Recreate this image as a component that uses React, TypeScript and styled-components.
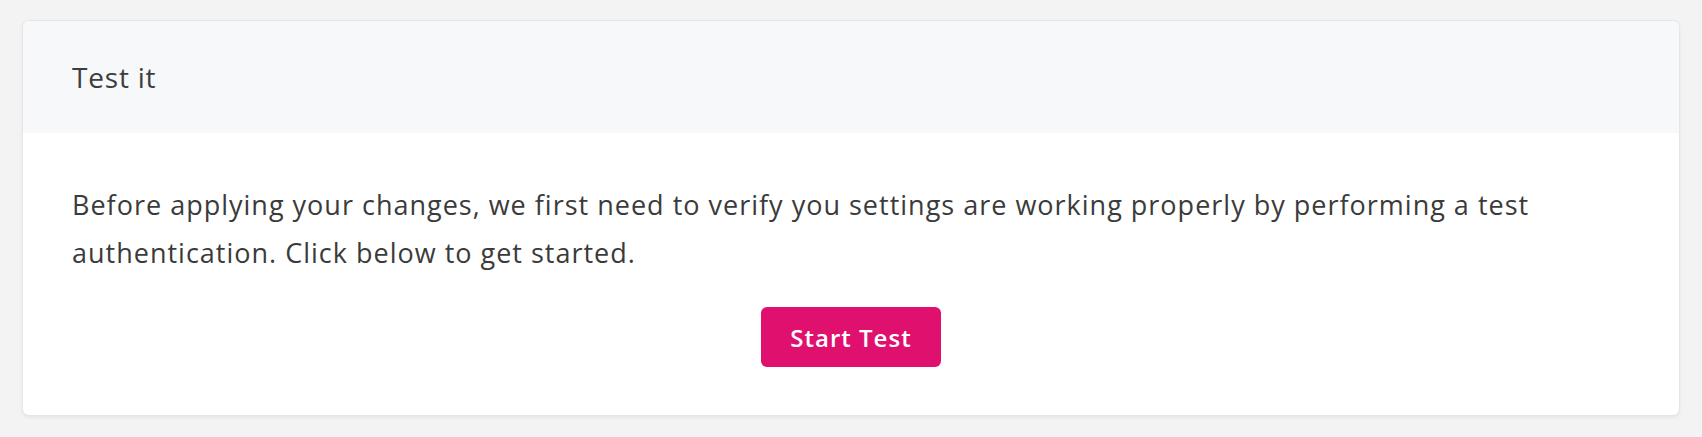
import React from 'react';
import styled, { createGlobalStyle } from 'styled-components';

const GlobalStyle = createGlobalStyle`
  html, body {
    margin: 0;
    padding: 0;
    background: #f3f3f3;
  }
  body {
    font-family: "Open Sans", Lato, sans-serif;
    color: #3b3b3b;
  }
`;

const Page = styled.div`
  padding: 21px 23px 22px;
`;

const Card = styled.section`
  background: #ffffff;
  border-radius: 6px;
  box-shadow: 0 0 0 1px #e6e6e6, 0 2px 4px rgba(0, 0, 0, 0.08);
  overflow: hidden;
`;

const CardHeader = styled.header`
  height: 112px;
  display: flex;
  align-items: center;
  padding: 0 49px;
  background: #f7f8f9;
`;

const Title = styled.h2`
  margin: 0;
  font-size: 28px;
  font-weight: 400;
  letter-spacing: 0.8px;
  color: #3d3d3d;
`;

const CardBody = styled.div`
  padding: 48px 49px 48px;
  display: flex;
  flex-direction: column;
  align-items: center;
  gap: 30px;
`;

const Text = styled.p`
  margin: 0;
  align-self: stretch;
  font-size: 27px;
  line-height: 48px;
  letter-spacing: 1px;
  color: #3b3b3b;
`;

const PrimaryButton = styled.button`
  height: 60px;
  width: 180px;
  padding: 0;
  border: none;
  border-radius: 6px;
  background: #e0106e;
  color: #ffffff;
  font-family: "Open Sans", Lato, sans-serif;
  font-size: 24px;
  font-weight: 600;
  letter-spacing: 1px;
  cursor: pointer;
`;

const App: React.FC = () => {
  return (
    <>
      <GlobalStyle />
      <Page>
        <Card>
          <CardHeader>
            <Title>Test it</Title>
          </CardHeader>
          <CardBody>
            <Text>
              Before applying your changes, we first need to verify you settings are working properly by
              performing a test authentication. Click below to get started.
            </Text>
            <PrimaryButton>Start Test</PrimaryButton>
          </CardBody>
        </Card>
      </Page>
    </>
  );
};

export default App;
